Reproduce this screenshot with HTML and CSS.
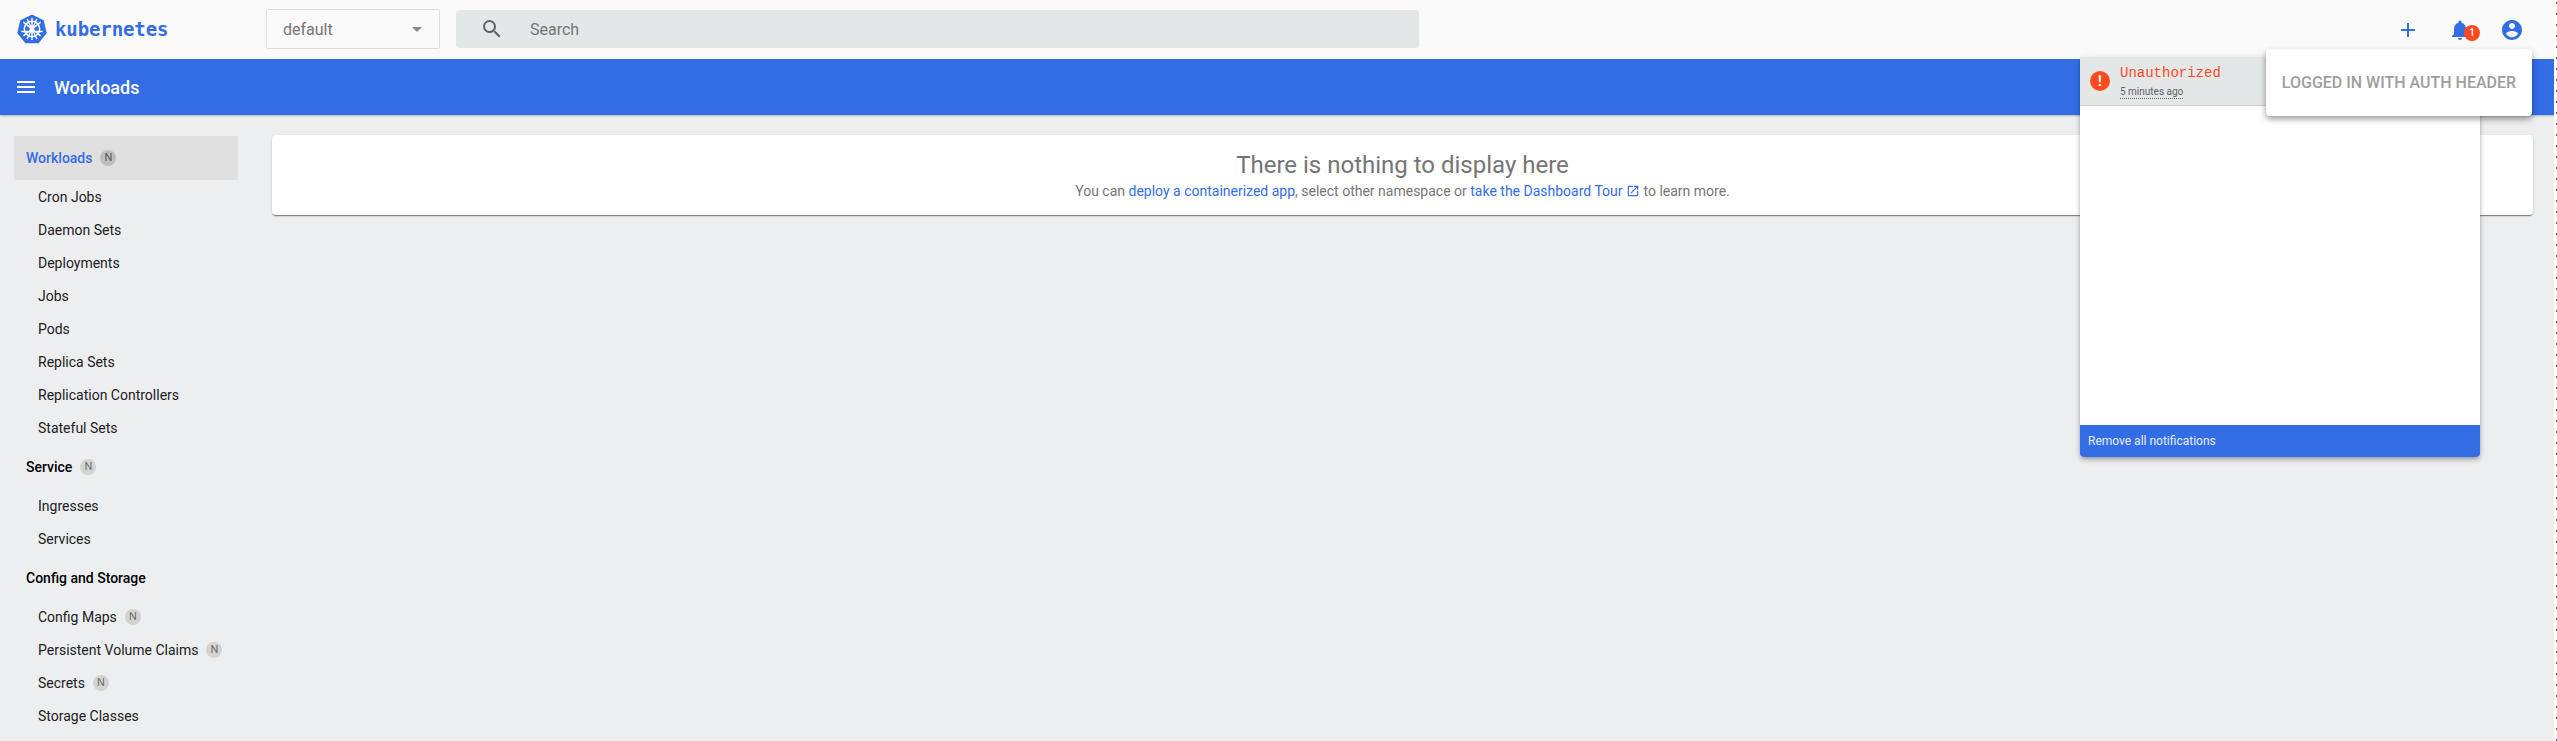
FILE: index.html
```html
<!DOCTYPE html>
<html lang="en">
<head>
<meta charset="utf-8">
<title>Kubernetes Dashboard</title>
<link rel="stylesheet" href="styles.css">
</head>
<body>
<div class="app">
  <header class="toolbar">
    <div class="brand">
      <svg class="logo" viewBox="0 0 32 32" width="30" height="30">
        <path class="logo-hex" d="M16 .6 L28.5 6.6 L31.7 20.2 L23 31.2 L9 31.2 L.3 20.2 L3.5 6.6 Z"/>
        <g class="logo-wheel">
          <circle cx="16" cy="16" r="8.2"/>
          <circle class="logo-hub" cx="16" cy="16" r="1.8"/>
          <path d="M16 4.2V27.8M6.8 8.7L25.2 23.3M25.2 8.7L6.8 23.3M4.6 18.6L27.4 18.6M10.8 26.6L21.2 5.4M21.2 26.6L10.8 5.4"/>
        </g>
      </svg>
      <span class="brand-name">kubernetes</span>
    </div>
    <div class="ns-select"><span>default</span><i class="caret"></i></div>
    <div class="search">
      <svg class="search-icon" viewBox="0 0 24 24" width="24" height="24"><path d="M15.5 14h-.79l-.28-.27A6.47 6.47 0 0 0 16 9.5 6.5 6.5 0 1 0 9.5 16c1.61 0 3.09-.59 4.23-1.57l.27.28v.79l5 4.99L20.49 19l-4.99-5zm-6 0C7.01 14 5 11.99 5 9.5S7.01 5 9.5 5 14 7.01 14 9.5 11.99 14 9.5 14z"/></svg>
      <span>Search</span>
    </div>
    <div class="actions">
      <svg class="action" viewBox="0 0 24 24" width="24" height="24"><path d="M19 13h-6v6h-2v-6H5v-2h6V5h2v6h6v2z"/></svg>
      <span class="bell">
        <svg class="action" viewBox="0 0 24 24" width="24" height="24"><path d="M12 22c1.1 0 2-.9 2-2h-4c0 1.1.9 2 2 2zm6-6v-5c0-3.07-1.63-5.64-4.5-6.32V4c0-.83-.67-1.5-1.5-1.5s-1.5.67-1.5 1.5v.68C7.64 5.36 6 7.92 6 11v5l-2 2v1h16v-1l-2-2z"/></svg>
        <b class="badge">1</b>
      </span>
      <svg class="action" viewBox="0 0 24 24" width="24" height="24"><path d="M12 2C6.48 2 2 6.48 2 12s4.48 10 10 10 10-4.48 10-10S17.52 2 12 2zm0 3c1.66 0 3 1.34 3 3s-1.34 3-3 3-3-1.34-3-3 1.34-3 3-3zm0 14.2c-2.5 0-4.71-1.28-6-3.22.03-1.99 4-3.08 6-3.08 1.99 0 5.97 1.09 6 3.08-1.29 1.94-3.5 3.22-6 3.22z"/></svg>
    </div>
  </header>
  <div class="titlebar">
    <svg class="menu" viewBox="0 0 24 24" width="24" height="24"><path d="M3 18h18v-2H3v2zm0-5h18v-2H3v2zm0-7v2h18V6H3z"/></svg>
    <span>Workloads</span>
  </div>
  <div class="main">
    <nav class="sidebar">
      <a class="nav-head active">Workloads <em class="ns">N</em></a>
      <a class="nav-item">Cron Jobs</a>
      <a class="nav-item">Daemon Sets</a>
      <a class="nav-item">Deployments</a>
      <a class="nav-item">Jobs</a>
      <a class="nav-item">Pods</a>
      <a class="nav-item">Replica Sets</a>
      <a class="nav-item">Replication Controllers</a>
      <a class="nav-item">Stateful Sets</a>
      <a class="nav-head">Service <em class="ns">N</em></a>
      <a class="nav-item">Ingresses</a>
      <a class="nav-item">Services</a>
      <a class="nav-head">Config and Storage</a>
      <a class="nav-item">Config Maps <em class="ns">N</em></a>
      <a class="nav-item">Persistent Volume Claims <em class="ns">N</em></a>
      <a class="nav-item">Secrets <em class="ns">N</em></a>
      <a class="nav-item">Storage Classes</a>
    </nav>
    <section class="content">
      <div class="card">
        <h1>There is nothing to display here</h1>
        <p>You can <a>deploy a containerized app</a>, select other namespace or <a>take the Dashboard Tour <svg class="ext" viewBox="0 0 24 24" width="14" height="14"><path d="M19 19H5V5h7V3H5a2 2 0 0 0-2 2v14a2 2 0 0 0 2 2h14c1.1 0 2-.9 2-2v-7h-2v7zM14 3v2h3.59l-9.83 9.83 1.41 1.41L19 6.41V10h2V3h-7z"/></svg></a> to learn more.</p>
      </div>
    </section>
  </div>
</div>
<aside class="panel">
  <div class="panel-head">
    <span class="alert">!</span>
    <div class="alert-text">
      <div class="alert-title">Unauthorized</div>
      <div class="alert-time"><span>5 minutes ago</span></div>
    </div>
  </div>
  <div class="panel-body"></div>
  <div class="panel-foot">Remove all notifications</div>
</aside>
<div class="tip">LOGGED IN WITH AUTH HEADER</div>
<div class="edge"></div>
</body>
</html>
```
FILE: styles.css
```css
* { box-sizing: border-box; }
html, body { margin: 0; height: 741px; overflow: hidden; background: #fff; }
body { font-family: Roboto, "Liberation Sans", sans-serif; font-size: 14px; position: relative; }
.app { width: 2554px; height: 741px; background: #edeef0; display: flex; flex-direction: column; overflow: hidden; }
.toolbar { height: 59px; flex: none; background: #fafafa; display: flex; align-items: flex-start; padding-top: 9px; }
.brand { width: 266px; flex: none; padding: 5px 0 0 17px; display: flex; align-items: center; gap: 8px; }
.logo { display: block; }
.logo-hex { fill: #326de6; }
.logo-wheel { fill: none; stroke: #fff; stroke-width: 1.5; }
.logo-hub { fill: #fff; }
.brand-name { font-family: "DejaVu Sans Mono", monospace; font-size: 19px; font-weight: 700; color: #326de6; letter-spacing: -.1px; }
.ns-select { width: 174px; height: 40px; border: 1px solid #ddd; border-radius: 2px; padding: 0 17px 0 16px; display: flex; align-items: center; justify-content: space-between; font-size: 16px; color: #757575; }
.caret { width: 0; height: 0; border: 5px solid transparent; border-top-color: #8a8a8a; border-bottom: 0; }
.search { width: 963px; height: 38px; margin: 1px 0 0 16px; background: #e4e7e8; border-radius: 3px; display: flex; align-items: center; padding-left: 24px; gap: 26px; font-size: 16px; color: #757575; }
.search-icon { fill: #616161; }
.actions { margin: 9px 0 0 auto; padding-right: 30px; display: flex; align-items: center; gap: 28px; }
.action { fill: #326de6; display: block; }
.bell { position: relative; display: block; }
.badge { position: absolute; left: 16px; top: 7px; width: 16px; height: 16px; border-radius: 50%; background: #ff4a1f; color: #fff; font-size: 10px; font-weight: 500; line-height: 16px; text-align: center; }
.titlebar { height: 56px; flex: none; background: #326de6; color: #fff; display: flex; align-items: center; padding-left: 14px; gap: 16px; font-size: 18px; font-weight: 500; box-shadow: 0 1px 2px rgba(0,0,0,.25); position: relative; }
.menu { fill: #fff; }
.main { flex: 1; display: flex; min-height: 0; }
.sidebar { width: 272px; flex: none; padding-top: 21px; display: flex; flex-direction: column; }
.nav-head { height: 44px; flex: none; margin: 1px 0 0 14px; width: 224px; padding-left: 12px; display: flex; align-items: center; gap: 8px; font-weight: 500; color: #000; border-radius: 2px; }
.nav-head.active { margin-top: 0; background: #e0e0e0; color: #326de6; }
.nav-item { height: 33px; flex: none; padding: 9px 0 0 38px; display: flex; align-items: flex-start; gap: 8px; line-height: 16px; color: #212121; }
.ns { width: 16px; height: 16px; border-radius: 50%; background: #d3d3d3; color: #6f6f6f; font: 400 11px/16px Roboto, sans-serif; text-align: center; }
.active .ns { background: #bdbdbd; color: #555; }
.content { flex: 1; padding: 20px 21px 0 0; }
.card { height: 80px; background: #fff; border-radius: 4px; box-shadow: 0 2px 1px -1px rgba(0,0,0,.3), 0 1px 1px rgba(0,0,0,.2), 0 1px 3px rgba(0,0,0,.12); text-align: center; color: #757575; padding-top: 16px; }
.card h1 { margin: 0; font-size: 24px; font-weight: 400; line-height: 28px; }
.card p { margin: 2px 0 0; line-height: 20px; }
.card a { color: #326de6; }
.ext { fill: #326de6; vertical-align: -2px; }
.panel { position: absolute; left: 2080px; top: 57px; width: 400px; height: 400px; background: #fff; border-radius: 0 0 4px 4px; box-shadow: 0 2px 4px -1px rgba(0,0,0,.3), 0 4px 5px rgba(0,0,0,.1), 0 1px 10px rgba(0,0,0,.08); display: flex; flex-direction: column; overflow: hidden; }
.panel-head { height: 49px; flex: none; background: #e4e7e8; border-bottom: 1px solid #c8cccd; display: flex; align-items: flex-start; padding-left: 10px; gap: 10px; }
.alert { width: 20px; height: 20px; margin-top: 14px; border-radius: 50%; background: #ff4a1f; color: #fff; font-weight: 700; font-size: 14px; line-height: 20px; text-align: center; }
.alert-text { margin-top: 7px; }
.alert-title { font-family: "Liberation Mono", monospace; font-size: 14px; line-height: 18px; color: #ff4a1f; }
.alert-time { font-size: 10px; line-height: 14px; margin-top: 3px; color: #616161; }
.alert-time span { border-bottom: 1px dotted #616161; display: inline-block; line-height: 12px; }
.panel-body { flex: 1; }
.panel-foot { height: 32px; flex: none; background: #326de6; color: #e8eefc; font-size: 12px; line-height: 32px; padding-left: 8px; }
.tip { position: absolute; left: 2266px; top: 49px; width: 266px; height: 67px; background: #fff; border-radius: 4px; box-shadow: 0 3px 6px rgba(0,0,0,.4); color: #9e9e9e; font-size: 16px; font-weight: 500; line-height: 67px; text-align: center; }
.edge { position: absolute; left: 2556px; top: 0; bottom: 0; width: 1px; background: repeating-linear-gradient(to bottom, transparent 0 2px, #555 2px 4px, transparent 4px 11px); }
```
